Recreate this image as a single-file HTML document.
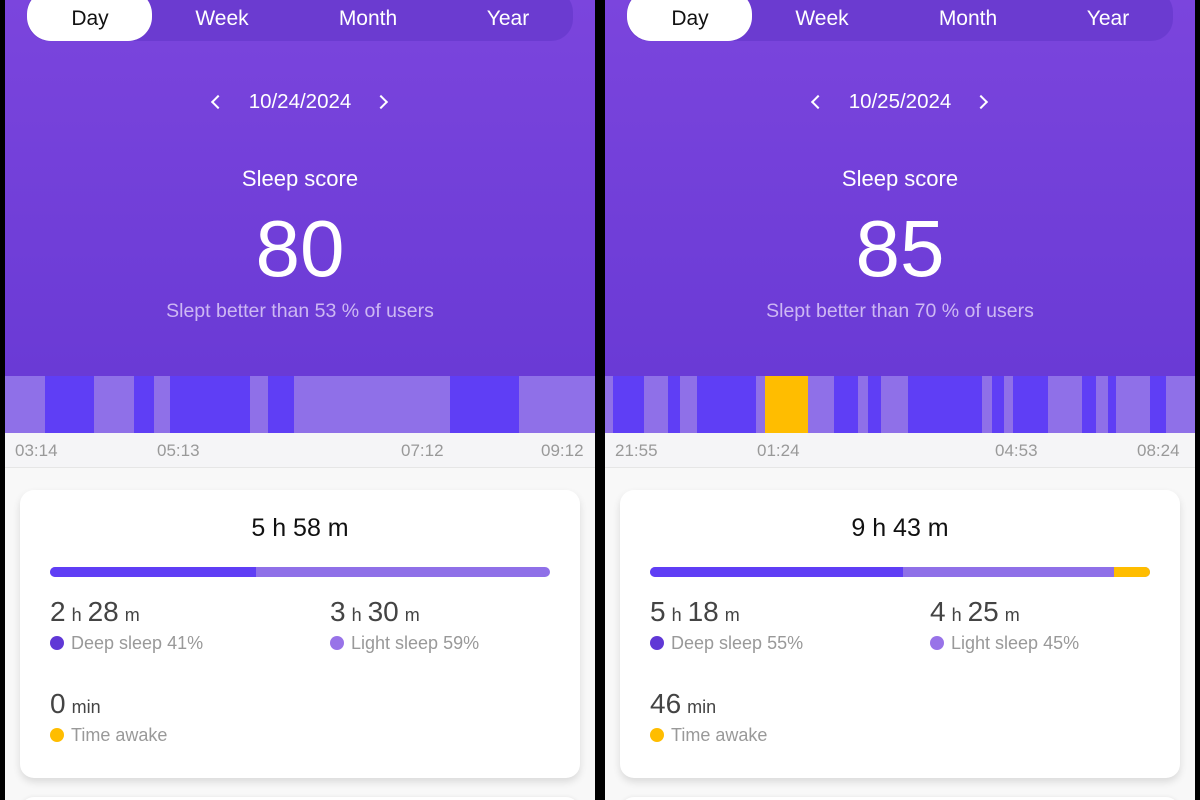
<!DOCTYPE html>
<html><head><meta charset="utf-8"><style>
*{margin:0;padding:0;box-sizing:border-box}
body{width:1200px;height:800px;background:#000;position:relative;overflow:hidden;font-family:"Liberation Sans",sans-serif}
.p{position:absolute;top:0;width:590px;height:800px;background:#f8f8f8;overflow:hidden}
.hd{position:absolute;left:0;top:0;width:590px;height:376px;background:linear-gradient(#7b45dd,#6a3ad5)}
.tabs{position:absolute;left:22px;top:-10px;width:546px;height:51px;border-radius:22px;background:#6b3bd0}
.pill{position:absolute;left:22px;top:-10px;width:125px;height:51px;border-radius:24px;background:#fff}
.t{position:absolute;top:7px;font-size:21px;color:#fff;transform:translateX(-50%)}
.c{position:absolute;left:0;width:590px;text-align:center;color:#fff}
.bars{position:absolute;left:0;top:376px;width:590px;height:57px;background:#8f70e8}
.bars div{position:absolute;top:0;height:57px}
.d{background:#5f3ef5}.y{background:#ffbd00}
.ax{position:absolute;left:0;top:433px;width:590px;height:35px;background:#f5f5f7;border-bottom:1px solid #e6e6e6;color:#999;font-size:17px}
.ax span{position:absolute;top:8px}
.card{position:absolute;left:15px;top:490px;width:560px;height:288px;background:#fff;border-radius:14px;box-shadow:0 4px 8px rgba(0,0,0,.12)}
.card2{position:absolute;left:15px;top:797px;width:560px;height:40px;background:#fff;border-radius:14px;box-shadow:0 0 4px rgba(0,0,0,.08)}
.tot{position:absolute;left:0;width:560px;top:24px;text-align:center;font-size:25px;color:#111}
.bar{position:absolute;left:30px;top:77px;width:500px;height:10px;border-radius:5px;background:#8f70e8;overflow:hidden}
.bar div{position:absolute;top:0;height:10px}
.v{position:absolute;font-size:28px;color:#444}
.v small{font-size:18px;margin:0 6px}
.l{position:absolute;font-size:18px;color:#999}
.l i{display:inline-block;width:14px;height:14px;border-radius:50%;margin-right:7px;vertical-align:-1px}
.arr{position:absolute;top:97px;width:10px;height:10px;border-left:2px solid #fff;border-bottom:2px solid #fff}
</style></head><body>

<div class="p" style="left:5px">
<div class="hd"></div>
<div class="tabs"></div><div class="pill"></div>
<span class="t" style="left:85px;color:#111">Day</span>
<span class="t" style="left:217px">Week</span>
<span class="t" style="left:363px">Month</span>
<span class="t" style="left:503px">Year</span>
<div class="arr" style="left:208px;transform:rotate(45deg)"></div>
<div class="arr" style="left:371px;transform:rotate(-135deg)"></div>
<div class="c" style="top:90px;font-size:20.5px">10/24/2024</div>
<div class="c" style="top:166px;font-size:22px">Sleep score</div>
<div class="c" style="top:203px;font-size:80px">80</div>
<div class="c" style="top:300px;font-size:19.5px;color:#cdb8f3">Slept better than 53 % of users</div>
<div class="bars">
<div class="d" style="left:40px;width:49px"></div>
<div class="d" style="left:129px;width:20px"></div>
<div class="d" style="left:165px;width:80px"></div>
<div class="d" style="left:263px;width:26px"></div>
<div class="d" style="left:445px;width:69px"></div>
</div>
<div class="ax"><span style="left:10px">03:14</span><span style="left:152px">05:13</span><span style="left:396px">07:12</span><span style="left:536px">09:12</span></div>
<div class="card">
<div class="tot">5 h 58 m</div>
<div class="bar"><div class="d" style="left:0;width:206px"></div></div>
<div class="v" style="left:30px;top:106px">2<small>h</small>28<small>m</small></div>
<div class="v" style="left:310px;top:106px">3<small>h</small>30<small>m</small></div>
<div class="l" style="left:30px;top:143px"><i style="background:#6038d6"></i>Deep sleep 41%</div>
<div class="l" style="left:310px;top:143px"><i style="background:#9873e8"></i>Light sleep 59%</div>
<div class="v" style="left:30px;top:198px">0<small>min</small></div>
<div class="l" style="left:30px;top:235px"><i style="background:#ffbd00"></i>Time awake</div>
</div>
<div class="card2"></div>
</div>

<div class="p" style="left:605px">
<div class="hd"></div>
<div class="tabs"></div><div class="pill"></div>
<span class="t" style="left:85px;color:#111">Day</span>
<span class="t" style="left:217px">Week</span>
<span class="t" style="left:363px">Month</span>
<span class="t" style="left:503px">Year</span>
<div class="arr" style="left:208px;transform:rotate(45deg)"></div>
<div class="arr" style="left:371px;transform:rotate(-135deg)"></div>
<div class="c" style="top:90px;font-size:20.5px">10/25/2024</div>
<div class="c" style="top:166px;font-size:22px">Sleep score</div>
<div class="c" style="top:203px;font-size:80px">85</div>
<div class="c" style="top:300px;font-size:19.5px;color:#cdb8f3">Slept better than 70 % of users</div>
<div class="bars">
<div class="d" style="left:8px;width:31px"></div>
<div class="d" style="left:63px;width:12px"></div>
<div class="d" style="left:92px;width:59px"></div>
<div class="y" style="left:160px;width:43px"></div>
<div class="d" style="left:229px;width:24px"></div>
<div class="d" style="left:263px;width:13px"></div>
<div class="d" style="left:303px;width:74px"></div>
<div class="d" style="left:387px;width:12px"></div>
<div class="d" style="left:408px;width:35px"></div>
<div class="d" style="left:477px;width:14px"></div>
<div class="d" style="left:503px;width:8px"></div>
<div class="d" style="left:545px;width:16px"></div>
</div>
<div class="ax"><span style="left:10px">21:55</span><span style="left:152px">01:24</span><span style="left:390px">04:53</span><span style="left:532px">08:24</span></div>
<div class="card">
<div class="tot">9 h 43 m</div>
<div class="bar"><div class="d" style="left:0;width:253px"></div><div class="y" style="left:464px;width:36px"></div></div>
<div class="v" style="left:30px;top:106px">5<small>h</small>18<small>m</small></div>
<div class="v" style="left:310px;top:106px">4<small>h</small>25<small>m</small></div>
<div class="l" style="left:30px;top:143px"><i style="background:#6038d6"></i>Deep sleep 55%</div>
<div class="l" style="left:310px;top:143px"><i style="background:#9873e8"></i>Light sleep 45%</div>
<div class="v" style="left:30px;top:198px">46<small>min</small></div>
<div class="l" style="left:30px;top:235px"><i style="background:#ffbd00"></i>Time awake</div>
</div>
<div class="card2"></div>
</div>
</body></html>
